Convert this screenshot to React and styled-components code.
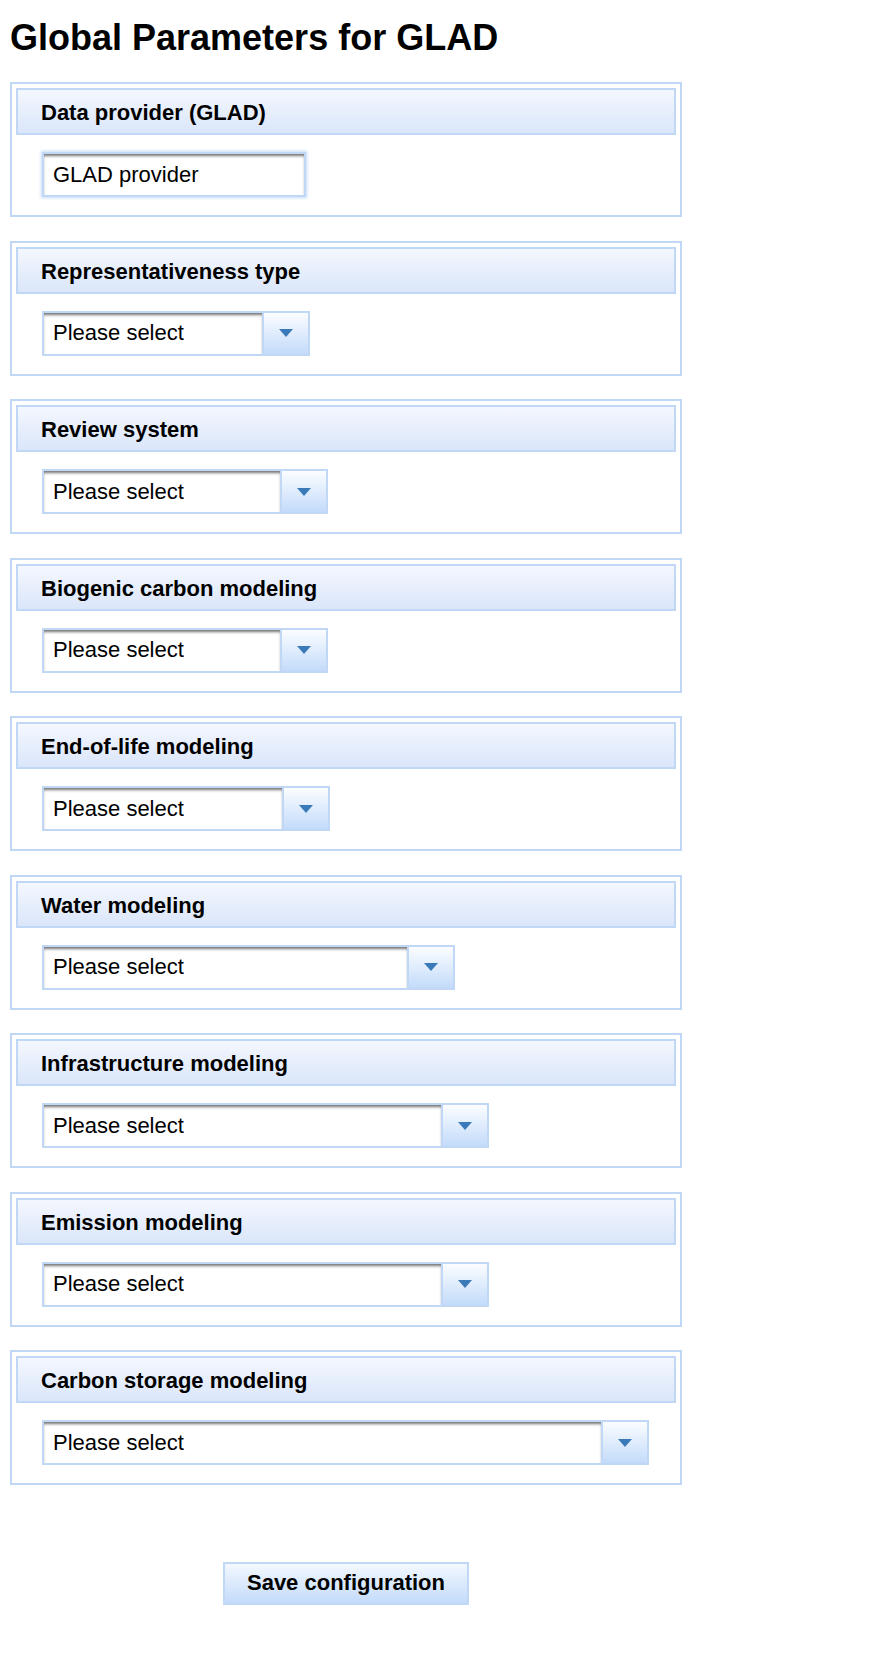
import React from "react";
import styled, { createGlobalStyle } from "styled-components";

const GlobalStyle = createGlobalStyle`
  html, body { margin: 0; padding: 0; background: #fff; }
  body {
    font-family: "Liberation Sans", Arial, sans-serif;
    color: #000;
  }
`;

const Page = styled.div`
  padding: 17px 10px 40px 10px;
  width: 672px;
`;

const Title = styled.h1`
  margin: 0 0 24px 0;
  font-size: 36px;
  line-height: 1.15;
  font-weight: bold;
`;

const Fieldset = styled.section`
  box-sizing: border-box;
  height: 135px;
  border: 2px solid #c0d7f6;
  padding: 4px;
  margin-bottom: 23.5px;
  display: flex;
  flex-direction: column;
`;

const Legend = styled.div`
  box-sizing: border-box;
  height: 47px;
  display: flex;
  align-items: center;
  padding: 3px 0 0 23px;
  border: 2px solid #c0d7f6;
  background: linear-gradient(#f4f7fe, #dae6fa);
  font-size: 22px;
  font-weight: bold;
`;

const Body = styled.div`
  padding: 17px 0 0 26px;
`;

const TextInput = styled.div`
  box-sizing: border-box;
  width: ${(p) => p.$w}px;
  height: 45px;
  border: 2px solid #c0d7f6;
  box-shadow: inset 0 3px 3px -1px rgba(0, 0, 0, 0.55), 0 0 3px 1px rgba(160, 195, 240, 0.6);
  display: flex;
  align-items: center;
  padding-left: 9px;
  font-size: 22px;
  background: #fff;
`;

const Select = styled.div`
  box-sizing: border-box;
  width: ${(p) => p.$w}px;
  height: 45px;
  border: 2px solid #c0d7f6;
  display: flex;
  background: #fff;
`;

const SelectText = styled.div`
  flex: 1;
  display: flex;
  align-items: center;
  padding-left: 9px;
  font-size: 22px;
  box-shadow: inset 0 3px 3px -1px rgba(0, 0, 0, 0.55);
`;

const SelectButton = styled.div`
  box-sizing: border-box;
  width: 46px;
  border-left: 2px solid #c0d7f6;
  background: linear-gradient(#fbfdff, #c3dbfa);
  display: flex;
  align-items: center;
  justify-content: center;
`;

const Arrow = styled.span`
  width: 0;
  height: 0;
  border-left: 7px solid transparent;
  border-right: 7px solid transparent;
  border-top: 8px solid #3a7ab8;
`;

const Footer = styled.div`
  display: flex;
  justify-content: center;
  padding-top: 53px;
`;

const SaveButton = styled.button`
  box-sizing: border-box;
  width: 246px;
  height: 43px;
  border: 2px solid #c0d7f6;
  background: linear-gradient(#f4f8ff, #c3dbfa);
  font-family: "Liberation Sans", Arial, sans-serif;
  font-size: 22px;
  font-weight: bold;
  color: #000;
  padding: 0;
  cursor: pointer;
`;

const params = [
  { label: "Representativeness type", w: 268 },
  { label: "Review system", w: 286 },
  { label: "Biogenic carbon modeling", w: 286 },
  { label: "End-of-life modeling", w: 288 },
  { label: "Water modeling", w: 413 },
  { label: "Infrastructure modeling", w: 447 },
  { label: "Emission modeling", w: 447 },
  { label: "Carbon storage modeling", w: 607 },
];

export default function App() {
  return (
    <Page>
      <GlobalStyle />
      <Title>Global Parameters for GLAD</Title>
      <Fieldset>
        <Legend>Data provider (GLAD)</Legend>
        <Body>
          <TextInput $w={264}>GLAD provider</TextInput>
        </Body>
      </Fieldset>
      {params.map((p) => (
        <Fieldset key={p.label}>
          <Legend>{p.label}</Legend>
          <Body>
            <Select $w={p.w}>
              <SelectText>Please select</SelectText>
              <SelectButton>
                <Arrow />
              </SelectButton>
            </Select>
          </Body>
        </Fieldset>
      ))}
      <Footer>
        <SaveButton>Save configuration</SaveButton>
      </Footer>
    </Page>
  );
}
